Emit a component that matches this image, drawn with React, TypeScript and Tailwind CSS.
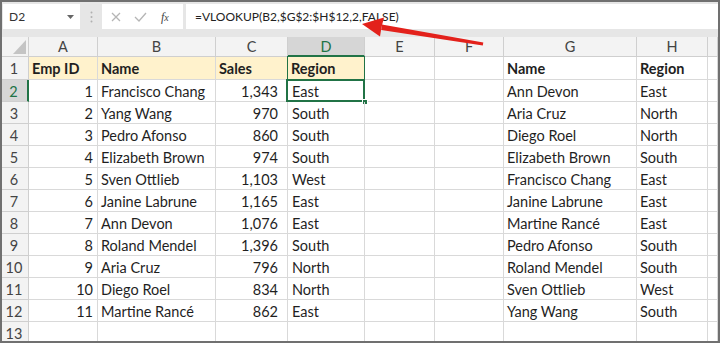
import React from "react";

const left = [
  ["1", "Francisco Chang", "1,343", "East"],
  ["2", "Yang Wang", "970", "South"],
  ["3", "Pedro Afonso", "860", "South"],
  ["4", "Elizabeth Brown", "974", "South"],
  ["5", "Sven Ottlieb", "1,103", "West"],
  ["6", "Janine Labrune", "1,165", "East"],
  ["7", "Ann Devon", "1,076", "East"],
  ["8", "Roland Mendel", "1,396", "South"],
  ["9", "Aria Cruz", "796", "North"],
  ["10", "Diego Roel", "834", "North"],
  ["11", "Martine Rancé", "862", "East"],
];

const right = [
  ["Ann Devon", "East"],
  ["Aria Cruz", "North"],
  ["Diego Roel", "North"],
  ["Elizabeth Brown", "South"],
  ["Francisco Chang", "East"],
  ["Janine Labrune", "East"],
  ["Martine Rancé", "East"],
  ["Pedro Afonso", "South"],
  ["Roland Mendel", "South"],
  ["Sven Ottlieb", "West"],
  ["Yang Wang", "South"],
];

const cell = "border-r border-b border-[#d9d9d9] flex items-center pt-[2px] overflow-visible whitespace-nowrap";
const hdr = "border-r border-b border-[#cfcfcf] bg-[#f3f3f3] flex items-center justify-center pt-[1px] text-[#444]";

function Row({ n, h, children, sel }: { n: number; h: string; children: React.ReactNode; sel?: boolean }) {
  return (
    <>
      <div
        className={`${h} ${
          sel
            ? "bg-[#d6d6d6] text-[#217346] border-r-2 border-r-[#217346] border-b border-[#cfcfcf]"
            : "bg-[#f3f3f3] text-[#444] border-r border-b border-[#cfcfcf]"
        } flex items-center justify-center pr-[2px] pt-[2px]`}
      >
        {n}
      </div>
      {children}
    </>
  );
}

export default function App() {
  const rowH = "h-[22px]";
  return (
    <div
      className="relative w-[720px] h-[343px] border-2 border-[#707070] bg-white overflow-hidden flex flex-col text-[#1f1f1f]"
      style={{ fontFamily: "Lato, 'Open Sans', sans-serif" }}
    >
      {/* toolbar */}
      <div className="h-[35px] shrink-0 bg-[#e6e6e6] flex items-start pt-[2px] pl-[1px] pr-[0px] gap-0">
        <div className="w-[77px] h-[25px] bg-white flex items-center justify-between pl-[6px] pr-[6px] text-[12px] text-[#333]">
          <span>D2</span>
          <svg width="7" height="4" viewBox="0 0 7 4">
            <path d="M0 0 L7 0 L3.5 4 Z" fill="#666" />
          </svg>
        </div>
        <div className="w-[22px] h-[25px] flex items-center justify-center">
          <svg width="3" height="12" viewBox="0 0 3 12">
            <circle cx="1.5" cy="1.5" r="1" fill="#b0b0b0" />
            <circle cx="1.5" cy="6" r="1" fill="#b0b0b0" />
            <circle cx="1.5" cy="10.5" r="1" fill="#b0b0b0" />
          </svg>
        </div>
        <div className="w-[81px] h-[25px] bg-white flex items-center pl-[9px] gap-[13px]">
          <svg width="10" height="10" viewBox="0 0 10 10">
            <path d="M1 1 L9 9 M9 1 L1 9" stroke="#b5b5b5" strokeWidth="1.3" />
          </svg>
          <svg width="13" height="10" viewBox="0 0 13 10">
            <path d="M1 5 L5 9 L12 1" stroke="#b5b5b5" strokeWidth="1.3" fill="none" />
          </svg>
          <span
            className="text-[12px] italic text-[#444] ml-[1px]"
            style={{ fontFamily: "'Liberation Serif', serif" }}
          >
            f<span className="text-[10px]">x</span>
          </span>
        </div>
        <div className="ml-[3px] flex-1 h-[25px] bg-white flex items-center pl-[9px] text-[12px] text-[#222]">
          =VLOOKUP(B2,$G$2:$H$12,2,FALSE)
        </div>
      </div>

      {/* grid */}
      <div className="grid grid-cols-[27px_69px_118px_72px_77px_70px_69px_133px_71px_1fr] text-[14.5px]">
        {/* column headers */}
        <div className="h-[20px] bg-[#f3f3f3] border-r border-b border-[#cfcfcf] flex items-end justify-end pr-[2px] pb-[2px]">
          <svg width="13" height="14" viewBox="0 0 13 14">
            <path d="M13 0 L13 14 L0 14 Z" fill="#c4c4c4" />
          </svg>
        </div>
        {["A", "B", "C"].map((c) => (
          <div key={c} className={`h-[20px] ${hdr}`}>{c}</div>
        ))}
        <div className="h-[20px] bg-[#d6d6d6] text-[#217346] border-r border-[#cfcfcf] border-b-2 border-b-[#217346] flex items-center justify-center pt-[1px]">
          D
        </div>
        {["E", "F", "G", "H", ""].map((c, i) => (
          <div key={i} className={`h-[20px] ${hdr}`}>{c}</div>
        ))}

        {/* row 1 */}
        <Row n={1} h="h-[23px]">
          <div className={`h-[23px] ${cell} bg-[#fff2cc] font-bold pl-[3px]`}>Emp ID</div>
          <div className={`h-[23px] ${cell} bg-[#fff2cc] font-bold pl-[3px]`}>Name</div>
          <div className={`h-[23px] ${cell} bg-[#fff2cc] font-bold pl-[3px]`}>Sales</div>
          <div className={`h-[23px] ${cell} bg-[#fff2cc] font-bold pl-[3px] relative`}>
            Region
            <div className="absolute left-[-1px] top-[-1px] right-[-1px] bottom-[-1px] border border-[#217346] pointer-events-none" />
          </div>
          <div className={`h-[23px] ${cell}`} />
          <div className={`h-[23px] ${cell}`} />
          <div className={`h-[23px] ${cell} font-bold pl-[3px]`}>Name</div>
          <div className={`h-[23px] ${cell} font-bold pl-[3px]`}>Region</div>
          <div className={`h-[23px] ${cell}`} />
        </Row>

        {left.map((r, i) => (
          <Row key={i} n={i + 2} h={rowH} sel={i === 0}>
            <div className={`${rowH} ${cell} justify-end pr-[4px]`}>{r[0]}</div>
            <div className={`${rowH} ${cell} pl-[3px]`}>{r[1]}</div>
            <div className={`${rowH} ${cell} justify-end pr-[9px]`}>{r[2]}</div>
            <div className={`${rowH} ${cell} pl-[4px] relative`}>
              {r[3]}
              {i === 0 && (
                <>
                  <div className="absolute left-[-2px] top-[-1px] right-[-1px] bottom-[-1px] border-2 border-[#217346] pointer-events-none" />
                  <div className="absolute right-[-4px] bottom-[-4px] w-[6px] h-[6px] bg-[#217346] border border-white" />
                </>
              )}
            </div>
            <div className={`${rowH} ${cell}`} />
            <div className={`${rowH} ${cell}`} />
            <div className={`${rowH} ${cell} pl-[3px]`}>{right[i][0]}</div>
            <div className={`${rowH} ${cell} pl-[3px]`}>{right[i][1]}</div>
            <div className={`${rowH} ${cell}`} />
          </Row>
        ))}

        <Row n={13} h={rowH}>
          {Array.from({ length: 9 }).map((_, i) => (
            <div key={i} className={`${rowH} ${cell}`} />
          ))}
        </Row>
      </div>

      {/* red arrow */}
      <svg
        className="absolute left-[-2px] top-[-2px] pointer-events-none"
        width="720"
        height="343"
        viewBox="0 0 720 343"
      >
        <polygon points="362,24 384,17.5 381.5,27.3 380,36.5" fill="#e3211b" />
        <polygon points="381.8,24.6 483.3,42.4 482.8,45.6 381.2,30" fill="#e3211b" />
      </svg>
    </div>
  );
}
